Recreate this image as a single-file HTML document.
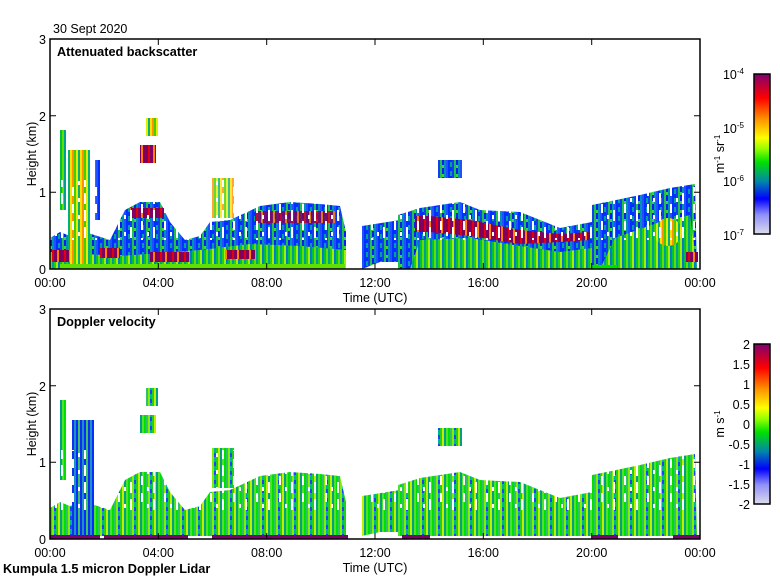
<!DOCTYPE html>
<html><head><meta charset="utf-8"><style>
html,body{margin:0;padding:0;background:#fff;width:780px;height:580px;overflow:hidden}
svg text{font-family:"Liberation Sans",sans-serif;font-size:12.5px;fill:#000}
.b{font-weight:bold;font-size:12.7px}
</style></head><body>
<svg width="780" height="580" viewBox="0 0 780 580" xmlns="http://www.w3.org/2000/svg">
<defs>
<pattern id="pb" width="14" height="9" patternUnits="userSpaceOnUse">
<rect x="0" y="0" width="2" height="9" fill="#0030ff"/><rect x="2" y="0" width="2" height="9" fill="#00a0a0"/>
<rect x="4" y="0" width="2" height="9" fill="#1040f0"/><rect x="6" y="0" width="2" height="9" fill="#20c050"/>
<rect x="8" y="0" width="2" height="9" fill="#0020ee"/><rect x="10" y="0" width="2" height="9" fill="#0090b0"/>
<rect x="12" y="0" width="2" height="9" fill="#2050ff"/><rect x="2" y="5" width="2" height="4" fill="#0030ff"/>
<rect x="8" y="3" width="2" height="3" fill="#40d040"/></pattern>
<pattern id="pg" width="12" height="7" patternUnits="userSpaceOnUse">
<rect x="0" y="0" width="2" height="7" fill="#00c040"/><rect x="2" y="0" width="2" height="7" fill="#60e000"/>
<rect x="4" y="0" width="2" height="7" fill="#00a090"/><rect x="6" y="0" width="2" height="7" fill="#20d020"/>
<rect x="8" y="0" width="2" height="7" fill="#a0f000"/><rect x="10" y="0" width="2" height="7" fill="#0080c0"/></pattern>
<pattern id="py" width="10" height="8" patternUnits="userSpaceOnUse">
<rect x="0" y="0" width="2" height="8" fill="#ffe000"/><rect x="2" y="0" width="2" height="8" fill="#ff9000"/>
<rect x="4" y="0" width="2" height="8" fill="#40d000"/><rect x="6" y="0" width="2" height="8" fill="#e0f000"/>
<rect x="8" y="0" width="2" height="8" fill="#00b080"/></pattern>
<pattern id="pp" width="12" height="6" patternUnits="userSpaceOnUse">
<rect width="12" height="6" fill="#800060"/><rect x="4" y="0" width="2" height="6" fill="#e00010"/>
<rect x="9" y="0" width="2" height="6" fill="#ff8000"/></pattern>
<pattern id="pd" width="16" height="9" patternUnits="userSpaceOnUse">
<rect x="0" y="0" width="2" height="9" fill="#00e000"/><rect x="2" y="0" width="2" height="9" fill="#30c070"/>
<rect x="4" y="0" width="2" height="9" fill="#80f000"/><rect x="6" y="0" width="2" height="9" fill="#00b0a0"/>
<rect x="8" y="0" width="2" height="9" fill="#20d020"/><rect x="10" y="0" width="2" height="9" fill="#c0f000"/>
<rect x="12" y="0" width="2" height="9" fill="#00a080"/><rect x="14" y="0" width="2" height="9" fill="#50e030"/>
<rect x="6" y="3" width="2" height="4" fill="#2040ff"/></pattern>
<pattern id="pdb" width="8" height="9" patternUnits="userSpaceOnUse">
<rect x="0" y="0" width="2" height="9" fill="#1030f0"/><rect x="2" y="0" width="2" height="9" fill="#2090c0"/>
<rect x="4" y="0" width="2" height="9" fill="#0030ff"/><rect x="6" y="0" width="2" height="9" fill="#40c060"/></pattern>
<pattern id="gap" width="23" height="17" patternUnits="userSpaceOnUse">
<rect x="3" y="0" width="2" height="9" fill="#fff"/><rect x="15" y="6" width="2" height="11" fill="#fff"/><rect x="9" y="11" width="2" height="4" fill="#fff"/></pattern>
<linearGradient id="cb" x1="0" y1="1" x2="0" y2="0">
<stop offset="0" stop-color="#dcdcec"/><stop offset="0.12" stop-color="#9090f8"/><stop offset="0.22" stop-color="#0000ff"/>
<stop offset="0.33" stop-color="#0088a8"/><stop offset="0.45" stop-color="#00e000"/><stop offset="0.53" stop-color="#90ff00"/>
<stop offset="0.6" stop-color="#ffff00"/><stop offset="0.72" stop-color="#ff9000"/><stop offset="0.85" stop-color="#ff0000"/>
<stop offset="1" stop-color="#800070"/></linearGradient>
</defs>

<!-- TOP PLOT DATA -->
<g>
<polygon fill="url(#pb)" points="50,269 50,238 60,232 70,236 85,232 110,240 125,210 140,202 160,202 170,222 185,240 200,236 210,222 230,220 260,206 290,202 320,204 340,206 346,232 346,269"/>
<polygon fill="url(#pg)" points="50,269 50,252 120,256 200,250 250,244 300,246 346,250 346,269"/>
<rect x="68" y="150" width="22" height="119" fill="url(#py)"/>
<rect x="60" y="130" width="6" height="80" fill="url(#pg)"/>
<rect x="95" y="160" width="5" height="60" fill="url(#pb)"/>
<rect x="130" y="208" width="34" height="10" fill="url(#pp)"/>
<rect x="52" y="250" width="18" height="12" fill="url(#pp)"/>
<rect x="100" y="248" width="20" height="10" fill="url(#pp)"/>
<rect x="150" y="252" width="40" height="10" fill="url(#pp)"/>
<rect x="225" y="250" width="30" height="9" fill="url(#pp)"/>
<rect x="255" y="211" width="80" height="12" fill="url(#pp)" opacity="0.85"/>
<rect x="140" y="145" width="16" height="18" fill="url(#pp)"/>
<rect x="146" y="118" width="12" height="18" fill="url(#py)"/>
<rect x="212" y="178" width="22" height="40" fill="url(#py)" opacity="0.8"/>
<rect x="60" y="264" width="285" height="5" fill="#60e000"/>
<polygon fill="url(#pb)" points="362,269 362,226 400,220 400,262 380,262"/>
<polygon fill="url(#pb)" points="398,269 398,215 420,208 460,202 480,210 520,212 560,228 592,222 592,269"/>
<polygon fill="url(#pg)" points="410,269 420,240 470,238 520,246 560,252 592,248 592,269"/>
<polygon fill="url(#pp)" points="415,216 430,216 470,220 520,230 560,234 590,232 590,240 560,242 520,244 470,236 430,232 415,232"/>
<rect x="438" y="160" width="24" height="18" fill="url(#pb)"/>
<polygon fill="url(#pb)" points="592,269 592,205 640,195 670,188 695,184 697,269"/>
<polygon fill="url(#pg)" points="600,269 615,238 660,222 690,215 697,269"/>
<ellipse cx="668" cy="232" rx="14" ry="14" fill="url(#py)"/>
<rect x="686" y="252" width="12" height="10" fill="url(#pp)"/>
<rect x="592" y="265" width="25" height="4" fill="#00e000"/>
<rect x="50" y="180" width="650" height="60" fill="url(#gap)"/>
</g>

<!-- BOTTOM PLOT DATA -->
<g>
<polygon fill="url(#pd)" points="50,536 50,508 60,502 70,506 85,502 110,510 125,480 140,472 160,472 170,492 185,510 200,506 210,492 230,490 260,476 290,472 320,474 340,476 346,502 346,536"/>
<rect x="60" y="400" width="6" height="80" fill="url(#pd)"/>
<rect x="72" y="420" width="22" height="116" fill="url(#pdb)"/>
<rect x="140" y="415" width="16" height="18" fill="url(#pd)"/>
<rect x="146" y="388" width="12" height="18" fill="url(#pd)"/>
<rect x="212" y="448" width="22" height="40" fill="url(#pd)"/>
<polygon fill="url(#pd)" points="362,536 362,496 400,490 400,532 380,532"/>
<polygon fill="url(#pd)" points="398,536 398,485 420,478 460,472 480,480 520,482 560,498 592,492 592,536"/>
<rect x="438" y="428" width="24" height="18" fill="url(#pd)"/>
<polygon fill="url(#pd)" points="592,536 592,475 640,465 670,458 695,454 697,536"/>
<rect x="50" y="450" width="650" height="60" fill="url(#gap)"/>
<g fill="#800070">
<rect x="50" y="535" width="50" height="4"/><rect x="104" y="535" width="84" height="4"/><rect x="212" y="535" width="136" height="4"/>
<rect x="402" y="535" width="28" height="4"/><rect x="592" y="535" width="26" height="4"/><rect x="673" y="535" width="27" height="4"/>
</g>
</g>

<!-- AXES -->
<g fill="none" stroke="#000" stroke-width="1.5">
<rect x="50" y="39" width="650" height="230"/>
<rect x="50" y="309" width="650" height="230"/>
<rect x="754" y="74" width="16" height="160" fill="url(#cb)"/>
<rect x="754" y="344" width="16" height="160" fill="url(#cb)"/>
</g>
<g stroke="#000" stroke-width="1">
<path d="M158.3,269v-6M266.7,269v-6M375,269v-6M483.3,269v-6M591.7,269v-6M158.3,39v6M266.7,39v6M375,39v6M483.3,39v6M591.7,39v6
M50,192.3h6M50,115.7h6M700,192.3h-6M700,115.7h-6
M158.3,539v-6M266.7,539v-6M375,539v-6M483.3,539v-6M591.7,539v-6M158.3,309v6M266.7,309v6M375,309v6M483.3,309v6M591.7,309v6
M50,462.3h6M50,385.7h6M700,462.3h-6M700,385.7h-6"/>
</g>

<!-- TEXT -->
<text x="53" y="33">30 Sept 2020</text>
<text x="57" y="56" class="b">Attenuated backscatter</text>
<text x="57" y="326" class="b">Doppler velocity</text>
<g text-anchor="end" style="font-size:13.5px">
<text x="46" y="44">3</text><text x="46" y="121">2</text><text x="46" y="197">1</text><text x="46" y="274">0</text>
<text x="46" y="314">3</text><text x="46" y="391">2</text><text x="46" y="467">1</text><text x="46" y="544">0</text>
</g>
<g text-anchor="middle" style="font-size:13.5px">
<text x="50" y="287">00:00</text><text x="158.3" y="287">04:00</text><text x="266.7" y="287">08:00</text><text x="375" y="287">12:00</text><text x="483.3" y="287">16:00</text><text x="591.7" y="287">20:00</text><text x="700" y="287">00:00</text>
<text x="50" y="557">00:00</text><text x="158.3" y="557">04:00</text><text x="266.7" y="557">08:00</text><text x="375" y="557">12:00</text><text x="483.3" y="557">16:00</text><text x="591.7" y="557">20:00</text><text x="700" y="557">00:00</text>
<text x="375" y="302">Time (UTC)</text>
<text x="375" y="572">Time (UTC)</text>
<text transform="translate(36,154) rotate(-90)">Height (km)</text>
<text transform="translate(36,424) rotate(-90)">Height (km)</text>
<text transform="translate(724,154) rotate(-90)">m<tspan dy="-4" font-size="8">-1</tspan><tspan dy="4"> sr</tspan><tspan dy="-4" font-size="8">-1</tspan></text>
<text transform="translate(724,424) rotate(-90)">m s<tspan dy="-4" font-size="8">-1</tspan></text>
</g>
<g text-anchor="end" style="font-size:13.5px">
<text x="744" y="79">10<tspan dy="-5" font-size="8">-4</tspan></text>
<text x="744" y="133">10<tspan dy="-5" font-size="8">-5</tspan></text>
<text x="744" y="186">10<tspan dy="-5" font-size="8">-6</tspan></text>
<text x="744" y="240">10<tspan dy="-5" font-size="8">-7</tspan></text>
<text x="750" y="349">2</text><text x="750" y="369">1.5</text><text x="750" y="389">1</text><text x="750" y="409">0.5</text>
<text x="750" y="429">0</text><text x="750" y="449">-0.5</text><text x="750" y="469">-1</text><text x="750" y="489">-1.5</text><text x="750" y="509">-2</text>
</g>
<text x="3" y="573" class="b">Kumpula 1.5 micron Doppler Lidar</text>
</svg>
</body></html>
